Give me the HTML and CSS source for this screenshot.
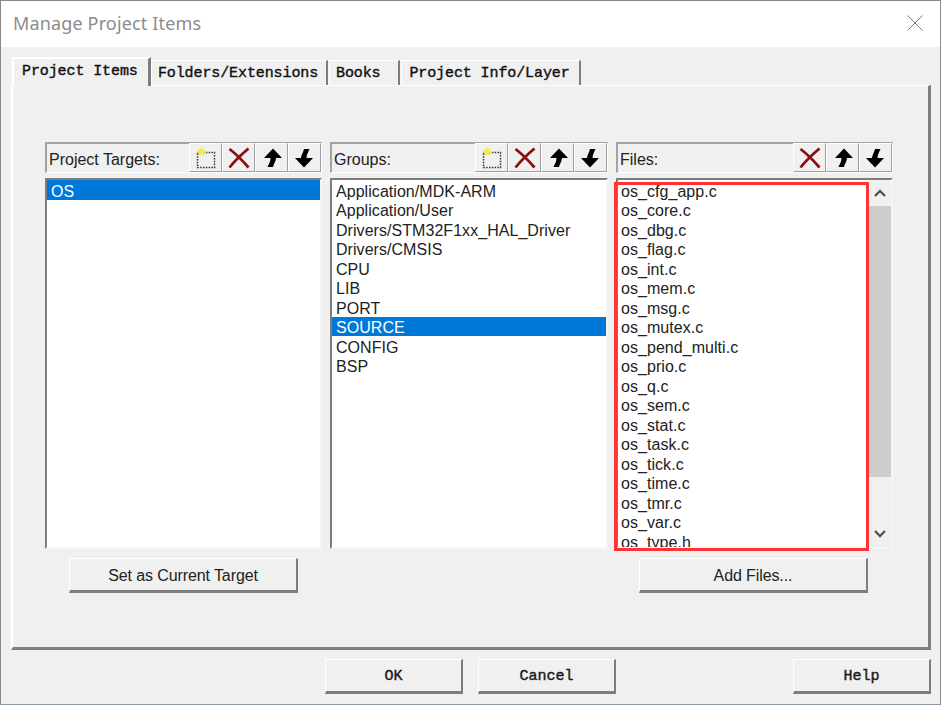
FILE: index.html
```html
<!DOCTYPE html>
<html lang="en">
<head>
  <meta charset="UTF-8">
  <meta name="viewport" content="width=device-width, initial-scale=1.0">
  <title>Manage Project Items</title>
  <link rel="stylesheet" href="styles.css">
</head>
<body>
  <svg class="defs" width="0" height="0">
    <symbol id="i-new" viewBox="0 0 24 24">
      <rect x="3.500" y="6.500" width="17" height="15" fill="none" stroke="#333" stroke-width="1.500" stroke-dasharray="1.500 1.300"/>
      <path d="M7 0l1 3.600L11.600 2 9.400 5l3.400 1.200-3.400.8 1 3.400L7.400 8 4.600 10.600l.8-3.600L1 6.200 5.200 5 3.400 1.800 6.200 3.400z" fill="#f4ee3c"/>
    </symbol>
    <symbol id="i-del" viewBox="0 0 24 24">
      <path d="M2.500 3c6.500 5 13 11.500 19 18.500M21.500 2.500c-6 5-13 11.500-19 19" fill="none" stroke="#8a0f0f" stroke-width="2.800"/>
    </symbol>
    <symbol id="i-up" viewBox="0 0 24 24">
      <path d="M13 2.500l9 9.500h-6c0 3-2 5-3 9H7.500c1-3 3-5 3-9H4z" fill="#000"/>
    </symbol>
    <symbol id="i-down" viewBox="0 0 24 24">
      <path d="M11 21.500L2 12h6c0-3 2-5 3-9h5.500c-1 3-3 5-3 9H20z" fill="#000"/>
    </symbol>
  </svg>

  <div class="dialog">
    <div class="titlebar">
      <span class="title">Manage Project Items</span>
      <svg class="close" width="16" height="16" viewBox="0 0 16 16">
        <path d="M.5.500l15 15M15.500.500l-15 15" stroke="#7a7a7a" stroke-width="1" fill="none"/>
      </svg>
    </div>

    <div class="tabs">
      <div class="tab active">Project Items</div>
      <div class="tab tab-folders">Folders/Extensions</div>
      <div class="tab tab-books">Books</div>
      <div class="tab tab-info">Project Info/Layer</div>
    </div>

    <div class="panel">
      <div class="columns">
        <section class="column">
          <div class="column-head">
            <span class="column-label">Project Targets:</span>
            <div class="tools">
              <button class="tool"><svg width="24" height="24"><use href="#i-new"/></svg></button>
              <button class="tool"><svg width="24" height="24"><use href="#i-del"/></svg></button>
              <button class="tool"><svg width="24" height="24"><use href="#i-up"/></svg></button>
              <button class="tool"><svg width="24" height="24"><use href="#i-down"/></svg></button>
            </div>
          </div>
          <div class="list">
            <ul class="rows">
              <li class="selected">OS</li>
            </ul>
          </div>
          <button class="btn btn-wide">Set as Current Target</button>
        </section>

        <section class="column">
          <div class="column-head">
            <span class="column-label">Groups:</span>
            <div class="tools">
              <button class="tool"><svg width="24" height="24"><use href="#i-new"/></svg></button>
              <button class="tool"><svg width="24" height="24"><use href="#i-del"/></svg></button>
              <button class="tool"><svg width="24" height="24"><use href="#i-up"/></svg></button>
              <button class="tool"><svg width="24" height="24"><use href="#i-down"/></svg></button>
            </div>
          </div>
          <div class="list">
            <ul class="rows">
              <li>Application/MDK-ARM</li>
              <li>Application/User</li>
              <li>Drivers/STM32F1xx_HAL_Driver</li>
              <li>Drivers/CMSIS</li>
              <li>CPU</li>
              <li>LIB</li>
              <li>PORT</li>
              <li class="selected">SOURCE</li>
              <li>CONFIG</li>
              <li>BSP</li>
            </ul>
          </div>
        </section>

        <section class="column">
          <div class="column-head">
            <span class="column-label">Files:</span>
            <div class="tools">
              <button class="tool"><svg width="24" height="24"><use href="#i-del"/></svg></button>
              <button class="tool"><svg width="24" height="24"><use href="#i-up"/></svg></button>
              <button class="tool"><svg width="24" height="24"><use href="#i-down"/></svg></button>
            </div>
          </div>
          <div class="list-wrap">
            <div class="list">
              <ul class="rows rows-files">
                <li>os_cfg_app.c</li>
                <li>os_core.c</li>
                <li>os_dbg.c</li>
                <li>os_flag.c</li>
                <li>os_int.c</li>
                <li>os_mem.c</li>
                <li>os_msg.c</li>
                <li>os_mutex.c</li>
                <li>os_pend_multi.c</li>
                <li>os_prio.c</li>
                <li>os_q.c</li>
                <li>os_sem.c</li>
                <li>os_stat.c</li>
                <li>os_task.c</li>
                <li>os_tick.c</li>
                <li>os_time.c</li>
                <li>os_tmr.c</li>
                <li>os_var.c</li>
                <li>os_type.h</li>
              </ul>
              <div class="scrollbar">
                <div class="arrow">
                  <svg width="14" height="10" viewBox="0 0 14 10"><path d="M2 8l5-5 5 5" fill="none" stroke="#555" stroke-width="2.400"/></svg>
                </div>
                <div class="thumb"></div>
                <div class="track"></div>
                <div class="arrow">
                  <svg width="14" height="10" viewBox="0 0 14 10"><path d="M2 2l5 5 5-5" fill="none" stroke="#555" stroke-width="2.400"/></svg>
                </div>
              </div>
            </div>
            <div class="highlight"></div>
          </div>
          <button class="btn btn-wide btn-add">Add Files...</button>
        </section>
      </div>
    </div>

    <div class="footer">
      <button class="btn btn-mono btn-ok">OK</button>
      <button class="btn btn-mono btn-cancel">Cancel</button>
      <button class="btn btn-mono btn-help">Help</button>
    </div>
  </div>
</body>
</html>
```

FILE: styles.css
```css
* {
  box-sizing: border-box;
}
html, body {
  margin: 0;
  padding: 0;
}
body {
  width: 941px;
  height: 705px;
  overflow: hidden;
  font-family: "Liberation Sans", Arial, sans-serif;
  background-color: #f0f0f0;
}
.defs {
  position: absolute;
}
.dialog {
  display: flex;
  flex-direction: column;
  width: 941px;
  height: 705px;
  border: 1px solid #8a8a8a;
  border-bottom-color: #8a99a5;
  background-color: #f0f0f0;
}

/* title bar */
.titlebar {
  display: flex;
  align-items: center;
  justify-content: space-between;
  height: 46px;
  padding: 0 17px 2px 12px;
  background-color: #fff;
}
.title {
  font-family: "Noto Sans", "Open Sans", sans-serif;
  font-size: 18px;
  letter-spacing: 0.15px;
  color: #8c8c8c;
}

/* tabs */
.tabs {
  display: flex;
  align-items: flex-end;
  height: 38px;
  margin-left: 11px;
  position: relative;
  z-index: 1;
}
.tab {
  height: 25px;
  padding-top: 3px;
  font-family: "Liberation Mono", monospace;
  font-size: 15px;
  letter-spacing: -0.1px;
  -webkit-text-stroke: 0.4px #111;
  line-height: 20px;
  text-align: center;
  color: #111;
  background-color: #f0f0f0;
  border-top: 1px solid #fff;
  border-left: 1px solid #fff;
  border-right: 2px solid #7d7d7d;
}
.tab.active {
  width: 139px;
  height: 29px;
  margin-bottom: -1px;
  padding-left: 8px;
  border-top-width: 2px;
  border-left-width: 2px;
  border-right-width: 3px;
  text-align: left;
}
.tab-folders {
  width: 177px;
  padding-right: 2px;
}
.tab-books {
  width: 71px;
  margin-left: 1px;
  padding-left: 6px;
  text-align: left;
}
.tab-info {
  width: 180px;
  margin-left: 1px;
  padding-right: 2px;
}

/* main panel */
.panel {
  width: 920px;
  height: 565px;
  margin-left: 10px;
  padding: 56px 0 0 32px;
  border-top: 1px solid #fff;
  border-left: 2px solid #fff;
  border-right: 3px solid #7d7d7d;
  border-bottom: 3px solid #7d7d7d;
}
.columns {
  display: grid;
  grid-template-columns: 277px 278px 277px;
  column-gap: 8px;
}
.column-head {
  display: flex;
  align-items: flex-end;
  justify-content: space-between;
  height: 31px;
  border-top: 2px solid #a3a3a3;
  border-left: 2px solid #a3a3a3;
  border-right: 1px solid #fff;
  border-bottom: 1px solid #fff;
}
.column-label {
  align-self: center;
  padding: 3px 0 0 2px;
  font-size: 16px;
  color: #222;
}
.tools {
  display: flex;
}
.tool {
  display: flex;
  align-items: center;
  justify-content: center;
  width: 33px;
  height: 29px;
  padding: 0;
  background-color: #f0f0f0;
  border: 1px solid #fff;
  border-right-color: #a0a0a0;
  border-bottom-color: #a0a0a0;
}

/* list boxes */
.list {
  display: flex;
  height: 371px;
  margin-top: 5px;
  background-color: #fff;
  border-top: 2px solid #7d7d7d;
  border-left: 2px solid #7d7d7d;
  border-right: 2px solid #f5f5f5;
  border-bottom: 2px solid #f5f5f5;
  overflow: hidden;
}
.rows {
  flex: 1;
  min-width: 0;
  margin: 0;
  padding: 0;
  list-style: none;
  overflow: hidden;
  font-size: 16px;
  letter-spacing: 0.05px;
  line-height: 19.5px;
  color: #222;
}
.rows li {
  height: 19.5px;
  padding: 1.5px 0 0 4px;
  white-space: nowrap;
}
.rows-files li {
  padding-left: 3px;
}
.rows li.selected {
  color: #fff;
  background-color: #0078d7;
}
.scrollbar {
  display: flex;
  flex-direction: column;
  flex-shrink: 0;
  width: 22px;
  background-color: #f0f0f0;
}
.arrow {
  display: flex;
  align-items: center;
  justify-content: center;
  height: 26px;
}
.thumb {
  height: 271px;
  background-color: #cdcdcd;
}
.track {
  flex: 1;
}
.list-wrap {
  position: relative;
}

/* red annotation drawn over the file list */
.highlight {
  position: absolute;
  left: -2px;
  top: 4px;
  width: 255px;
  height: 369px;
  border: 3px solid #ff3333;
  pointer-events: none;
}

/* buttons */
.btn {
  height: 35px;
  padding: 0;
  font-family: "Liberation Sans", Arial, sans-serif;
  font-size: 16px;
  color: #222;
  background-color: #f0f0f0;
  border-top: 1px solid #fff;
  border-left: 1px solid #fff;
  border-right: 2px solid #7d7d7d;
  border-bottom: 3px solid #7d7d7d;
}
.btn-wide {
  display: block;
  width: 229px;
  margin-top: 9px;
  margin-left: 24px;
  padding-top: 2px;
  letter-spacing: -0.1px;
}
.btn-add {
  margin-left: 23px;
}
.btn-mono {
  width: 138px;
  padding-top: 2px;
  font-family: "Liberation Mono", monospace;
  font-size: 15px;
  -webkit-text-stroke: 0.4px #111;
}

/* bottom row */
.footer {
  display: flex;
  margin-top: 9px;
  padding: 0 9px 0 324px;
}
.btn-cancel {
  margin-left: 15px;
}
.btn-help {
  margin-left: auto;
}
```
